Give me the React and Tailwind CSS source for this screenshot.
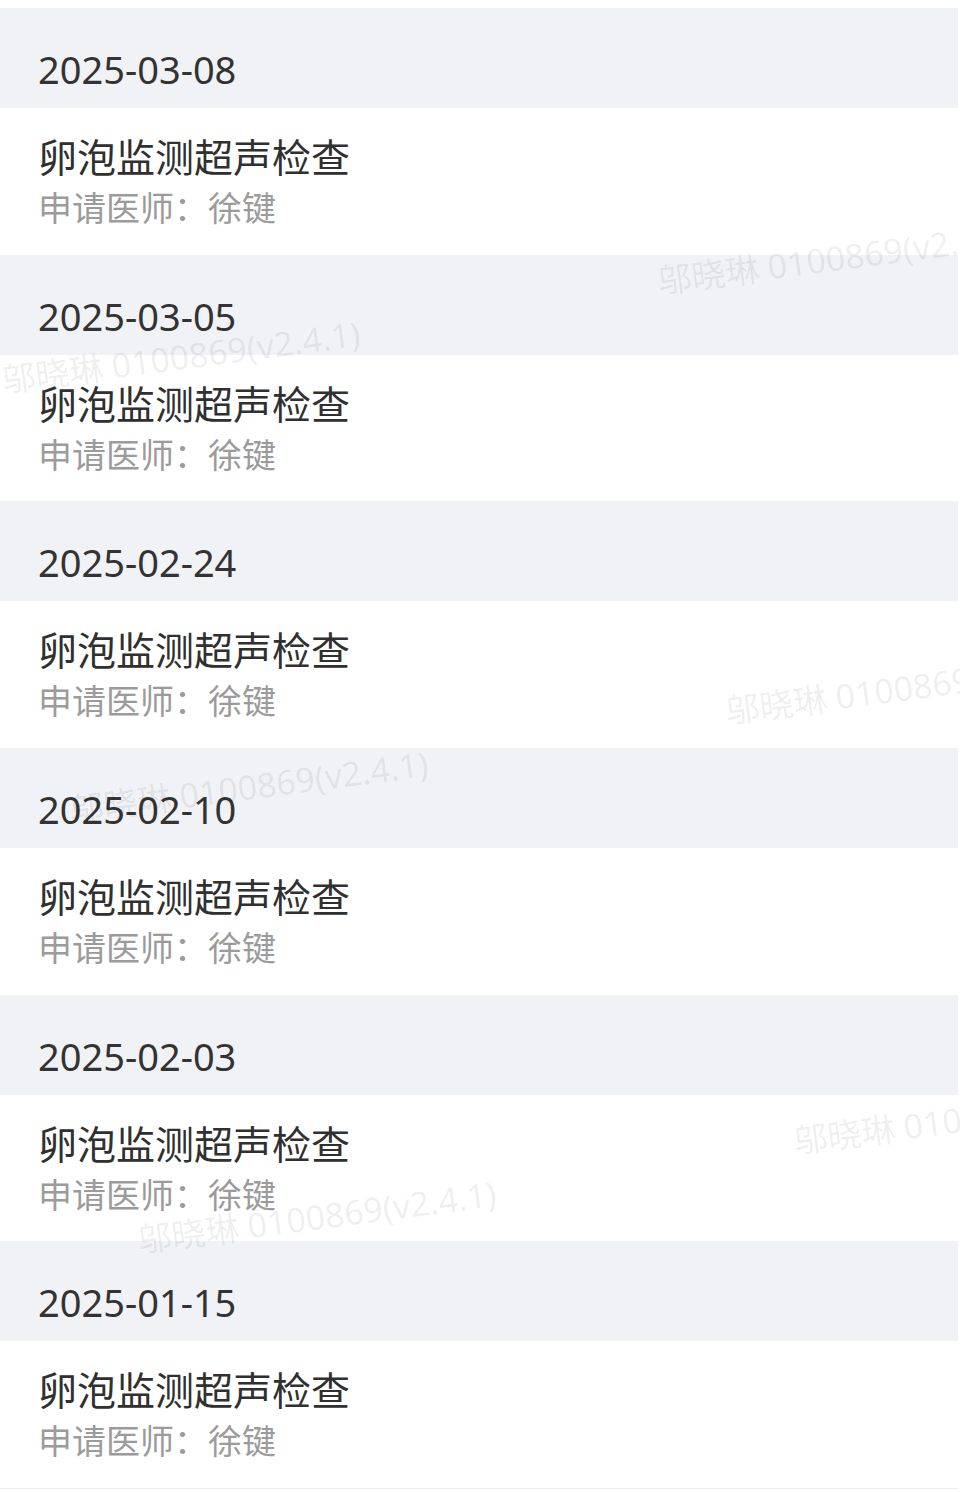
const records = [
  { date: "2025-03-08", name: "卵泡监测超声检查", doctor: "徐键" },
  { date: "2025-03-05", name: "卵泡监测超声检查", doctor: "徐键" },
  { date: "2025-02-24", name: "卵泡监测超声检查", doctor: "徐键" },
  { date: "2025-02-10", name: "卵泡监测超声检查", doctor: "徐键" },
  { date: "2025-02-03", name: "卵泡监测超声检查", doctor: "徐键" },
  { date: "2025-01-15", name: "卵泡监测超声检查", doctor: "徐键" },
];

// tiled watermark, positions are where each copy starts
const marks = [
  "left-[660px] top-[264px]",
  "left-[4px] top-[363px]",
  "left-[72px] top-[793px]",
  "left-[728px] top-[694px]",
  "left-[796px] top-[1124px]",
  "left-[140px] top-[1223px]",
];

const font = "font-['Noto_Sans','Noto_Sans_CJK_SC',sans-serif]";

const RecordItem = ({ item }) => (
  <div>
    <div className="h-[100px] bg-[#f1f2f6] pl-[38px] pt-[42px]">
      <div className="text-[38px] leading-[38px] text-[#333333]">{item.date}</div>
    </div>
    <div className="h-[146.67px] bg-white pl-[38px] pt-[29px]">
      <div className="text-[39px] leading-[39px] text-[#303030]">{item.name}</div>
      <div className="mt-[15px] text-[34px] leading-[34px] text-[#9b9b9b]">
        申请医师：{item.doctor}
      </div>
    </div>
  </div>
);

const App = () => {
  return (
    <div className={`relative h-[1492px] w-[960px] overflow-hidden bg-white ${font}`}>
      <div className="w-[958px] pt-[8px]">
        {records.map((item, index) => (
          <RecordItem key={index} item={item} />
        ))}
        <div className="h-[1px] bg-[#ececef]" />
      </div>
      {marks.map((pos, index) => (
        <div
          key={index}
          className={`pointer-events-none absolute ${pos} origin-bottom-left rotate-[-7.5deg] whitespace-nowrap text-[34px] leading-[34px] text-black/[0.08]`}
        >
          邬晓琳 0100869(v2.4.1)
        </div>
      ))}
    </div>
  );
};

export default App;
